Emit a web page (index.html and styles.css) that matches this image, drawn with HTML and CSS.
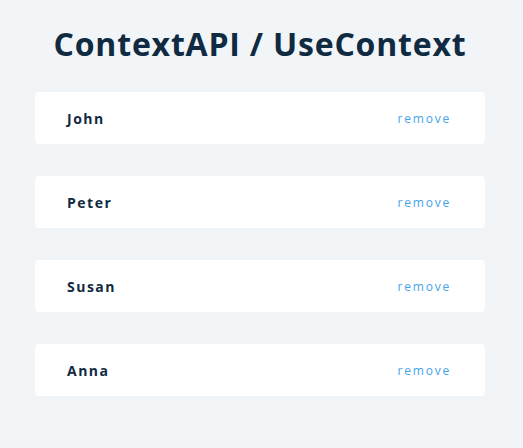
FILE: index.html
```html
<!DOCTYPE html>
<html>
<head>
<meta charset="utf-8">
<link rel="stylesheet" href="styles.css">
</head>
<body>
<main class="page">
  <h1 class="title">ContextAPI / UseContext</h1>
  <ul class="people">
    <li class="person"><span class="name">John</span><button class="remove">remove</button></li>
    <li class="person"><span class="name">Peter</span><button class="remove">remove</button></li>
    <li class="person"><span class="name">Susan</span><button class="remove">remove</button></li>
    <li class="person"><span class="name">Anna</span><button class="remove">remove</button></li>
  </ul>
</main>
</body>
</html>
```
FILE: styles.css
```css
html, body {
  margin: 0;
  padding: 0;
}
body {
  background: #f1f5f8;
  font-family: "Open Sans", "Noto Sans", sans-serif;
  color: #102a42;
  padding-right: 3px;
}
.page {
  width: 450px;
  margin: 0 auto;
  padding-top: 20px;
}
.title {
  margin: 0 0 24px;
  text-align: center;
  font-size: 32px;
  line-height: 48px;
  font-weight: 700;
  letter-spacing: 0.8px;
  color: #102a42;
}
.people {
  list-style: none;
  margin: 0;
  padding: 0;
  display: flex;
  flex-direction: column;
  gap: 32px;
}
.person {
  background: #fff;
  border-radius: 4px;
  height: 52px;
  padding: 0 34px 0 32px;
  display: flex;
  align-items: center;
  justify-content: space-between;
}
.name {
  font-size: 14px;
  font-weight: 700;
  letter-spacing: 1.5px;
  color: #102a42;
}
.remove {
  background: none;
  border: none;
  padding: 0;
  font-family: inherit;
  font-size: 12px;
  letter-spacing: 1.8px;
  color: #45a3ea;
  cursor: pointer;
}
```
